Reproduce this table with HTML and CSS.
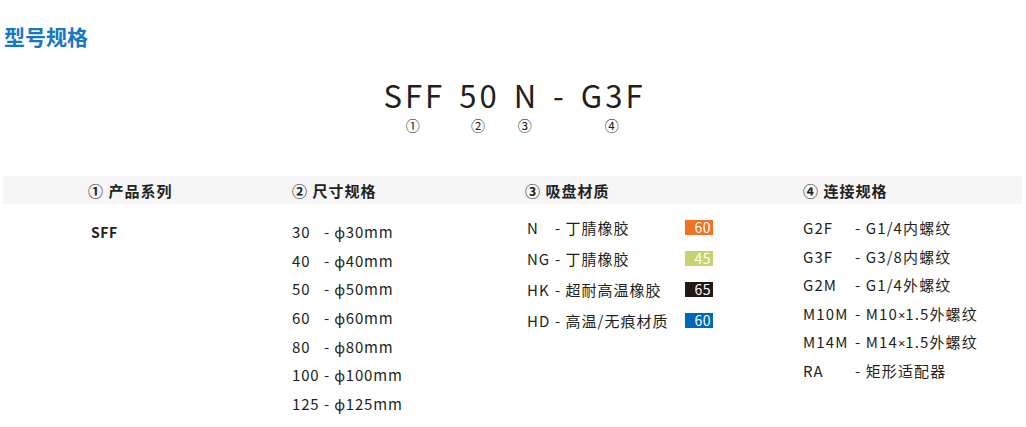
FILE: index.html
```html
<!DOCTYPE html>
<html lang="zh">
<head>
<meta charset="utf-8">
<link rel="stylesheet" href="styles.css">
</head>
<body>
<h2 class="title">型号规格</h2>
<div class="code">
  <div class="seg"><span class="part">SFF</span><span class="num">①</span></div>
  <div class="seg"><span class="part">50</span><span class="num">②</span></div>
  <div class="seg"><span class="part">N</span><span class="num">③</span></div>
  <div class="seg"><span class="part">-</span><span class="num"></span></div>
  <div class="seg"><span class="part">G3F</span><span class="num">④</span></div>
</div>
<div class="table">
  <div class="head">
    <div>① 产品系列</div>
    <div>② 尺寸规格</div>
    <div>③ 吸盘材质</div>
    <div>④ 连接规格</div>
  </div>
  <div class="body">
    <div class="col c1"><div class="row">SFF</div></div>
    <div class="col c2">
      <div class="row"><span class="k k2">30</span>- ϕ30mm</div>
      <div class="row"><span class="k k2">40</span>- ϕ40mm</div>
      <div class="row"><span class="k k2">50</span>- ϕ50mm</div>
      <div class="row"><span class="k k2">60</span>- ϕ60mm</div>
      <div class="row"><span class="k k2">80</span>- ϕ80mm</div>
      <div class="row"><span class="k k2">100</span>- ϕ100mm</div>
      <div class="row"><span class="k k2">125</span>- ϕ125mm</div>
    </div>
    <div class="col c3">
      <div class="row"><span class="mat"><span class="k k3">N</span>- 丁腈橡胶</span><span class="badge orange">60</span></div>
      <div class="row"><span class="mat"><span class="k k3">NG</span>- 丁腈橡胶</span><span class="badge lime">45</span></div>
      <div class="row"><span class="mat"><span class="k k3">HK</span>- 超耐高温橡胶</span><span class="badge black">65</span></div>
      <div class="row"><span class="mat"><span class="k k3">HD</span>- 高温/无痕材质</span><span class="badge blue">60</span></div>
    </div>
    <div class="col c4">
      <div class="row"><span class="k k4">G2F</span>- G1/4内螺纹</div>
      <div class="row"><span class="k k4">G3F</span>- G3/8内螺纹</div>
      <div class="row"><span class="k k4">G2M</span>- G1/4外螺纹</div>
      <div class="row"><span class="k k4">M10M</span>- M10<span class="x">×</span>1.5外螺纹</div>
      <div class="row"><span class="k k4">M14M</span>- M14<span class="x">×</span>1.5外螺纹</div>
      <div class="row"><span class="k k4">RA</span>- 矩形适配器</div>
    </div>
  </div>
</div>
</body>
</html>
```
FILE: styles.css
```css
* { box-sizing: border-box; }
body {
  margin: 0;
  width: 1026px;
  height: 427px;
  overflow: hidden;
  background: #fff;
  color: #231f20;
  font-family: "Noto Sans CJK SC", "Noto Sans", sans-serif;
}
.title {
  margin: 0;
  padding: 22px 0 0 4px;
  font-size: 21px;
  line-height: 29px;
  font-weight: 700;
  color: #1677c4;
}
.code {
  display: flex;
  justify-content: center;
  align-items: flex-start;
  margin-top: 26px;
  gap: 17px;
}
.seg {
  display: flex;
  flex-direction: column;
  align-items: center;
}
.part {
  font-size: 31px;
  line-height: 36px;
  letter-spacing: 3px;
  margin-right: -3px;
}
.num {
  font-size: 14px;
  line-height: 20px;
  margin-top: 2px;
  height: 20px;
}
.table {
  margin: 41px 4px 0 3px;
}
.head {
  display: grid;
  grid-template-columns: 204px 233px 278px 1fr;
  padding-left: 85px;
  background: #f6f6f6;
  height: 28px;
  align-items: center;
  font-size: 15px;
  font-weight: 700;
  color: #222;
  letter-spacing: 1px;
}
.body {
  display: grid;
  grid-template-columns: 204px 233px 278px 1fr;
  padding-left: 85px;
  font-size: 15px;
  letter-spacing: 0.8px;
}
.c1 { padding-top: 14px; padding-left: 3px; font-weight: 700; font-size: 14px; letter-spacing: 0.5px; }
.c1 .row { line-height: 28px; }
.c2 { padding-top: 14px; }
.c2 .row { line-height: 28.7px; height: 28.7px; }
.c3 { padding-top: 8px; padding-left: 2px; letter-spacing: 1px; }
.c3 .row { line-height: 31px; height: 31px; display: flex; align-items: center; }
.c4 { padding-top: 10px; letter-spacing: 1.1px; }
.c4 .row { line-height: 28.5px; height: 28.5px; }
.k { display: inline-block; }
.k2 { width: 32px; }
.k3 { width: 28px; }
.k4 { width: 52px; }
.x { font-family: "Noto Sans", sans-serif; font-size: 13px; letter-spacing: 0; }
.mat { width: 158px; }
.badge {
  display: inline-block;
  width: 28px;
  height: 15px;
  line-height: 15px;
  font-size: 14px;
  color: #fff;
  text-align: right;
  padding-right: 2px;
  letter-spacing: 0.5px;
}
.orange { background: #f07222; }
.lime { background: #c5d46a; }
.black { background: #231815; }
.blue { background: #0068b7; }
```
